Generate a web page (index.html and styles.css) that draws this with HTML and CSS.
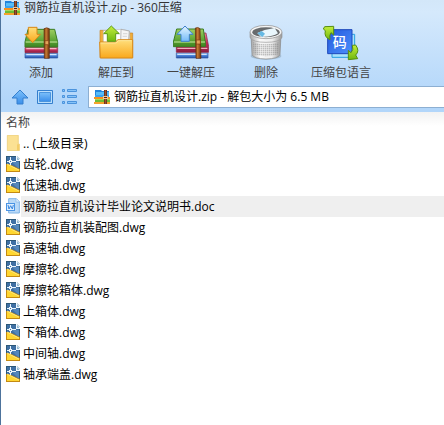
FILE: index.html
```html
<!DOCTYPE html>
<html lang="zh-CN">
<head>
<meta charset="utf-8">
<title>钢筋拉直机设计.zip - 360压缩</title>
<link rel="stylesheet" href="styles.css">
</head>
<body>
<svg class="defs" aria-hidden="true">
  <defs>
    <linearGradient id="green" x2="0" y2="1"><stop offset="0" stop-color="#9fcf62"/><stop offset=".6" stop-color="#5fa637"/><stop offset="1" stop-color="#3c8420"/></linearGradient>
    <linearGradient id="lime" x2="0" y2="1"><stop offset="0" stop-color="#c4ee3c"/><stop offset="1" stop-color="#6fb80e"/></linearGradient>
    <linearGradient id="red" x2="0" y2="1"><stop offset="0" stop-color="#f0809c"/><stop offset=".5" stop-color="#c22f5a"/><stop offset="1" stop-color="#8c1c40"/></linearGradient>
    <linearGradient id="blue" x2="0" y2="1"><stop offset="0" stop-color="#a4ccf8"/><stop offset=".5" stop-color="#4a84dc"/><stop offset="1" stop-color="#2450a4"/></linearGradient>
    <linearGradient id="belt"><stop offset="0" stop-color="#70340c"/><stop offset=".4" stop-color="#c87c34"/><stop offset="1" stop-color="#6c300c"/></linearGradient>
    <linearGradient id="gold" x2="0" y2="1"><stop offset="0" stop-color="#ffdf7c"/><stop offset="1" stop-color="#f9a81c"/></linearGradient>
    <linearGradient id="sky" x2="0" y2="1"><stop offset="0" stop-color="#e4f5ff"/><stop offset="1" stop-color="#74baf8"/></linearGradient>
    <linearGradient id="tile" x2="1" y2="1"><stop offset="0" stop-color="#2458dc"/><stop offset="1" stop-color="#4c90fc"/></linearGradient>
    <linearGradient id="nav" x2="0" y2="1"><stop offset="0" stop-color="#7cc0fa"/><stop offset="1" stop-color="#3a8eea"/></linearGradient>
    <linearGradient id="metal"><stop offset="0" stop-color="#a4a4a4"/><stop offset=".3" stop-color="#fafafa"/><stop offset=".7" stop-color="#ededed"/><stop offset="1" stop-color="#989898"/></linearGradient>
    <pattern id="holes" width="6" height="6" patternUnits="userSpaceOnUse"><rect x="1" y="1" width="3" height="3" fill="#777"/></pattern>
    <symbol id="archive" viewBox="0 0 16 16">
      <path d="M1 1h6l1 1h7v6H1z" fill="#2384dc"/><path d="M2 3h13v4H2z" fill="#58bdf8"/><path d="M1 6h14v2H1z" fill="#3da2ee"/>
      <path d="M0 8h16v2H0z" fill="#f7931e"/><path d="M1 10h15v3H1z" fill="#6dbb35"/><path d="M1 10h15v1H1z" fill="#a4d957"/><path d="M0 13h16v2H0z" fill="#f5a32c"/>
      <path d="M10 1h3v14h-3z" fill="#70351d"/><path d="M11 1h1v14h-1z" fill="#9a532c"/><path d="M9 7h5v3H9z" fill="#f0c493"/><path d="M10 8h3v1h-3z" fill="#4e2414"/>
    </symbol>
    <symbol id="dwg" viewBox="0 0 14 16">
      <path d="M0 0h11l3 3v13H0z" fill="#2c5878"/><path d="M1 1h9l3 3v10H1z" fill="#3f70a4"/><path d="M6 6h7v7z" fill="#5487bb"/>
      <path d="M0 8h3l11 5v3H0z" fill="#c48a12"/><path d="M1 9h2l10 5v1H1z" fill="#ffd630"/><path d="m1 8 12 6" stroke="#ffef88"/>
      <path d="M4 1h1v3H4zm0 6h1v2H4zM1 5h2v1H1zm5 0h4v1H6zM3 4h3v3H3z" fill="#eaf5fc"/><path d="M4 5h1v1H4z" fill="#3f70a4"/>
      <path d="M10 0h1l3 3v2h-4z" fill="#f2faff"/><path d="m11 1 2 2v1h-2z" fill="#93b9d2"/>
    </symbol>
    <symbol id="doc" viewBox="0 0 42 48">
      <path d="M8 2h23l9 9v34H8z" fill="#b9d9f7" stroke="#80b4e6" stroke-width="3"/><path d="M30 2v10h10" fill="#e6f3ff" stroke="#80b4e6" stroke-width="2"/>
      <path d="M0 15h27v24H0z" fill="#4a94e4"/><path d="M3 18h21v18H3z" fill="#dceefe"/><path d="m6 21 3 12 5-10 5 10 3-12" fill="none" stroke="#3785df" stroke-width="3"/>
    </symbol>
    <symbol id="folder" viewBox="0 0 42 48">
      <path d="M4 1h33v26h3v20H4z" fill="#fbe193" stroke="#e9c86c" stroke-width="2"/><path d="M33 28h7v18h-7z" fill="#f3cd68"/>
    </symbol>
  </defs>
</svg>
<main class="window">
  <div class="chrome">
    <header class="titlebar"><svg class="app-icon" aria-hidden="true"><use href="#archive"/></svg><h1>钢筋拉直机设计.zip - 360压缩</h1></header>
    <div class="toolbar" role="toolbar">
      <button type="button">
        <svg viewBox="22 15 108 108" aria-hidden="true">
          <path d="M28 100h98v14H28z" fill="url(#blue)" stroke="#2d56a0" stroke-width="2"/><path d="M32 104h90" stroke="#e4f2ff" stroke-width="3"/>
          <path d="M28 82h98v16H28z" fill="url(#red)" stroke="#8c2444" stroke-width="2"/><path d="M32 86h90" stroke="#ffc8d4" stroke-width="3"/>
          <path d="M37 28h80l9 38v15H28V66z" fill="url(#green)" stroke="#3a7c24" stroke-width="3"/><path d="M30 66h95" stroke="#c9eba0" stroke-width="3"/>
          <path d="M85 26q8-5 16 0v89H86z" fill="url(#belt)" stroke="#653010" stroke-width="2"/><path d="M88 62h11v12H88z" fill="#e4a35a" stroke="#7c3c10" stroke-width="2"/>
          <path d="M38 22h26v21h10L51 68 28 43h10z" fill="url(#gold)" stroke="#d88716" stroke-width="3"/>
        </svg><span>添加</span>
      </button>
      <button type="button">
        <svg viewBox="10 15 108 108" aria-hidden="true">
          <path d="M16 31h24l6 8h68v74H16z" fill="#f0ad38" stroke="#c98424" stroke-width="2"/>
          <path d="m26 32 54-4 25 5v44H26z" fill="#fff" stroke="#bbb" stroke-width="2"/><path d="m79 28 25 5-3 35H78z" fill="#f5f5f5" stroke="#999" stroke-width="2"/><path d="M85 41h13m-14 8h13m-65-9h10" stroke="#c6c6c6" stroke-width="2"/>
          <path d="M15 66h48l6-7h45v55H17z" fill="url(#gold)" stroke="#d98b1c" stroke-width="3"/><path d="M18 69h47l6-7h40" fill="none" stroke="#fff0b0" stroke-width="2"/>
          <path d="m50 18 24 23H63v23H38V41H27z" fill="url(#lime)" stroke="#5d9914" stroke-width="3"/>
        </svg><span>解压到</span>
      </button>
      <button type="button">
        <svg viewBox="21 15 108 108" aria-hidden="true">
          <path d="M31 99h95v15H31z" fill="url(#blue)" stroke="#2d56a0" stroke-width="2"/><path d="M34 103h88" stroke="#e4f2ff" stroke-width="3"/>
          <path d="M98 39h22l8 40v18H31V80h67z" fill="url(#red)" stroke="#8c2444" stroke-width="2"/><path d="M34 85h90" stroke="#ffc8d4" stroke-width="3"/>
          <path d="M32 27h80l6 40v13H22V66z" fill="url(#green)" stroke="#3a7c24" stroke-width="3"/><path d="M24 66h93" stroke="#c9eba0" stroke-width="3"/>
          <path d="M88 24q8-4 14 2l3 89H90z" fill="url(#belt)" stroke="#653010" stroke-width="2"/><path d="M91 60h12v12H91z" fill="#e4a35a" stroke="#7c3c10" stroke-width="2"/>
          <path d="m57 18 24 25H70v21H45V43H33z" fill="url(#sky)" stroke="#3f80cc" stroke-width="3"/>
        </svg><span>一键解压</span>
      </button>
      <button type="button">
        <svg viewBox="15 15 108 108" aria-hidden="true">
          <ellipse cx="69" cy="108" rx="46" ry="11" fill="#849bac" opacity=".5"/>
          <path d="M24 43h90l-3 61q-5 12-42 13-37-1-42-13z" fill="url(#metal)" stroke="#888" stroke-width="2"/><path d="M30 67q39 12 78 0l-2 36q-37 11-74 0z" fill="url(#holes)"/>
          <path d="M21 37h96v16q-9 14-48 14T21 53z" fill="url(#metal)" stroke="#999" stroke-width="2"/>
          <ellipse cx="69" cy="36" rx="48" ry="20" fill="#f5f5f5" stroke="#888" stroke-width="2"/><ellipse cx="69" cy="37" rx="41" ry="15" fill="#686b6d"/>
          <path d="m43 39 22-9 30-6 10 16q-18 12-52 10z" fill="#e9f6fc"/><path d="m43 40 13-7 10 8-8 10z" fill="#66b9e3"/>
        </svg><span>删除</span>
      </button>
      <button type="button">
        <svg viewBox="15 15 108 108" aria-hidden="true">
          <path d="M42 43h68v69H42z" fill="#a9e3fc" stroke="#289fe0" stroke-width="3"/><path d="M29 29h73v72H29z" fill="url(#tile)" stroke="#1e49bb" stroke-width="3"/>
          <text class="glyph" x="65" y="80" text-anchor="middle">码</text>
          <path d="m20 20 27-1v26l-8-7q-6 8-3 21-19-8-14-27l-6-5z" fill="url(#lime)" stroke="#568e10" stroke-width="3"/>
          <path d="M113 75q13 18 0 30l6 11-28 3V91l8 7q9-9 4-22z" fill="url(#lime)" stroke="#568e10" stroke-width="3"/>
        </svg><span>压缩包语言</span>
      </button>
    </div>
    <div class="navbar">
      <button type="button" aria-label="向上"><svg viewBox="0 0 18 16" aria-hidden="true"><path d="m9 1 8 8h-5v6H6V9H1z" fill="url(#nav)" stroke="#347fce"/></svg></button>
      <button type="button" aria-label="预览"><svg viewBox="0 0 18 16" aria-hidden="true"><path d="M1.500 1.500h15v13h-15z" fill="#b9defc" stroke="#347fce"/><path d="M3.500 3.500h11v9h-11z" fill="url(#nav)" stroke="#4a94de"/></svg></button>
      <button type="button" aria-label="列表"><svg viewBox="0 0 18 16" aria-hidden="true"><path d="M1.500.5h2v2h-2zm0 6h2v2h-2zm0 6h2v2h-2zm5-12h9v2h-9zm0 6h9v2h-9zm0 6h9v2h-9z" fill="#86c3f8" stroke="#4b93dc"/></svg></button>
      <label class="address"><svg class="app-icon" aria-hidden="true"><use href="#archive"/></svg><input type="text" aria-label="地址" value="钢筋拉直机设计.zip - 解包大小为 6.5 MB"></label>
    </div>
  </div>
  <table class="files">
    <thead><tr><th scope="col">名称</th></tr></thead>
    <tbody>
      <tr><td><div><svg aria-hidden="true"><use href="#folder"/></svg><span>.. (上级目录)</span></div></td></tr>
      <tr><td><div><svg aria-hidden="true"><use href="#dwg"/></svg><span>齿轮.dwg</span></div></td></tr>
      <tr><td><div><svg aria-hidden="true"><use href="#dwg"/></svg><span>低速轴.dwg</span></div></td></tr>
      <tr class="selected"><td><div><svg aria-hidden="true"><use href="#doc"/></svg><span>钢筋拉直机设计毕业论文说明书.doc</span></div></td></tr>
      <tr><td><div><svg aria-hidden="true"><use href="#dwg"/></svg><span>钢筋拉直机装配图.dwg</span></div></td></tr>
      <tr><td><div><svg aria-hidden="true"><use href="#dwg"/></svg><span>高速轴.dwg</span></div></td></tr>
      <tr><td><div><svg aria-hidden="true"><use href="#dwg"/></svg><span>摩擦轮.dwg</span></div></td></tr>
      <tr><td><div><svg aria-hidden="true"><use href="#dwg"/></svg><span>摩擦轮箱体.dwg</span></div></td></tr>
      <tr><td><div><svg aria-hidden="true"><use href="#dwg"/></svg><span>上箱体.dwg</span></div></td></tr>
      <tr><td><div><svg aria-hidden="true"><use href="#dwg"/></svg><span>下箱体.dwg</span></div></td></tr>
      <tr><td><div><svg aria-hidden="true"><use href="#dwg"/></svg><span>中间轴.dwg</span></div></td></tr>
      <tr><td><div><svg aria-hidden="true"><use href="#dwg"/></svg><span>轴承端盖.dwg</span></div></td></tr>
    </tbody>
  </table>
</main>
</body>
</html>
```
FILE: styles.css
```css
* {
  box-sizing: border-box;
}

body {
  margin: 0;
  background: #fff;
  color: #000;
  font: 12px/16px "Open Sans", "Noto Sans CJK SC", sans-serif;
}

button,
input {
  border: 0;
  padding: 0;
  background: none;
  font: inherit;
}

svg {
  display: block;
  flex: none;
}

.defs {
  position: absolute;
  width: 0;
  height: 0;
}

.window {
  min-height: 100vh;
  border-left: 1px solid #4d739c;
}

.chrome {
  background: linear-gradient(#d3e7f9, #d5e9fc 12px, #b2d6fa 100px, #b2d6fa);
  padding-bottom: 4px;
}

.titlebar {
  display: flex;
  align-items: center;
  gap: 4px;
  height: 16px;
  padding-left: 3px;
}

.titlebar h1 {
  margin: 0;
  color: #333;
  font-size: 12px;
  font-weight: 400;
}

.app-icon {
  width: 16px;
  height: 16px;
}

.toolbar {
  display: flex;
  gap: 1px;
  padding: 9px 3px 0;
}

.toolbar button {
  display: flex;
  flex-direction: column;
  align-items: center;
  gap: 4px;
  width: 74px;
  color: #444;
}

.toolbar svg {
  width: 36px;
  height: 36px;
}

.glyph {
  fill: #fff;
  font: 500 42px "Noto Sans CJK SC", sans-serif;
}

.navbar {
  display: flex;
  align-items: center;
  gap: 7px;
  padding: 5px 0 0 10px;
}

.navbar button svg {
  width: 18px;
  height: 16px;
}

.address {
  display: flex;
  flex: 1;
  align-items: center;
  gap: 4px;
  height: 22px;
  margin-left: 2px;
  padding-left: 5px;
  border: 1px solid #8dafd2;
  border-right: 0;
  background: #fff;
}

.address input {
  flex: 1;
  min-width: 0;
  outline: 0;
}

.files {
  width: 100%;
  border-collapse: collapse;
}

.files th {
  height: 21px;
  padding: 0 5px;
  background: linear-gradient(#f2f2f2, #fff 14px);
  color: #444;
  font-weight: 400;
  text-align: left;
}

.files td {
  padding: 0 0 0 5px;
}

.files td div {
  display: flex;
  align-items: flex-start;
  gap: 1px;
}

.files svg {
  width: 14px;
  height: 16px;
  margin-top: 2px;
}

.files span {
  flex: 1;
  height: 21px;
  padding-left: 2px;
  line-height: 21px;
}

.selected span {
  background: #efefef;
}
```
